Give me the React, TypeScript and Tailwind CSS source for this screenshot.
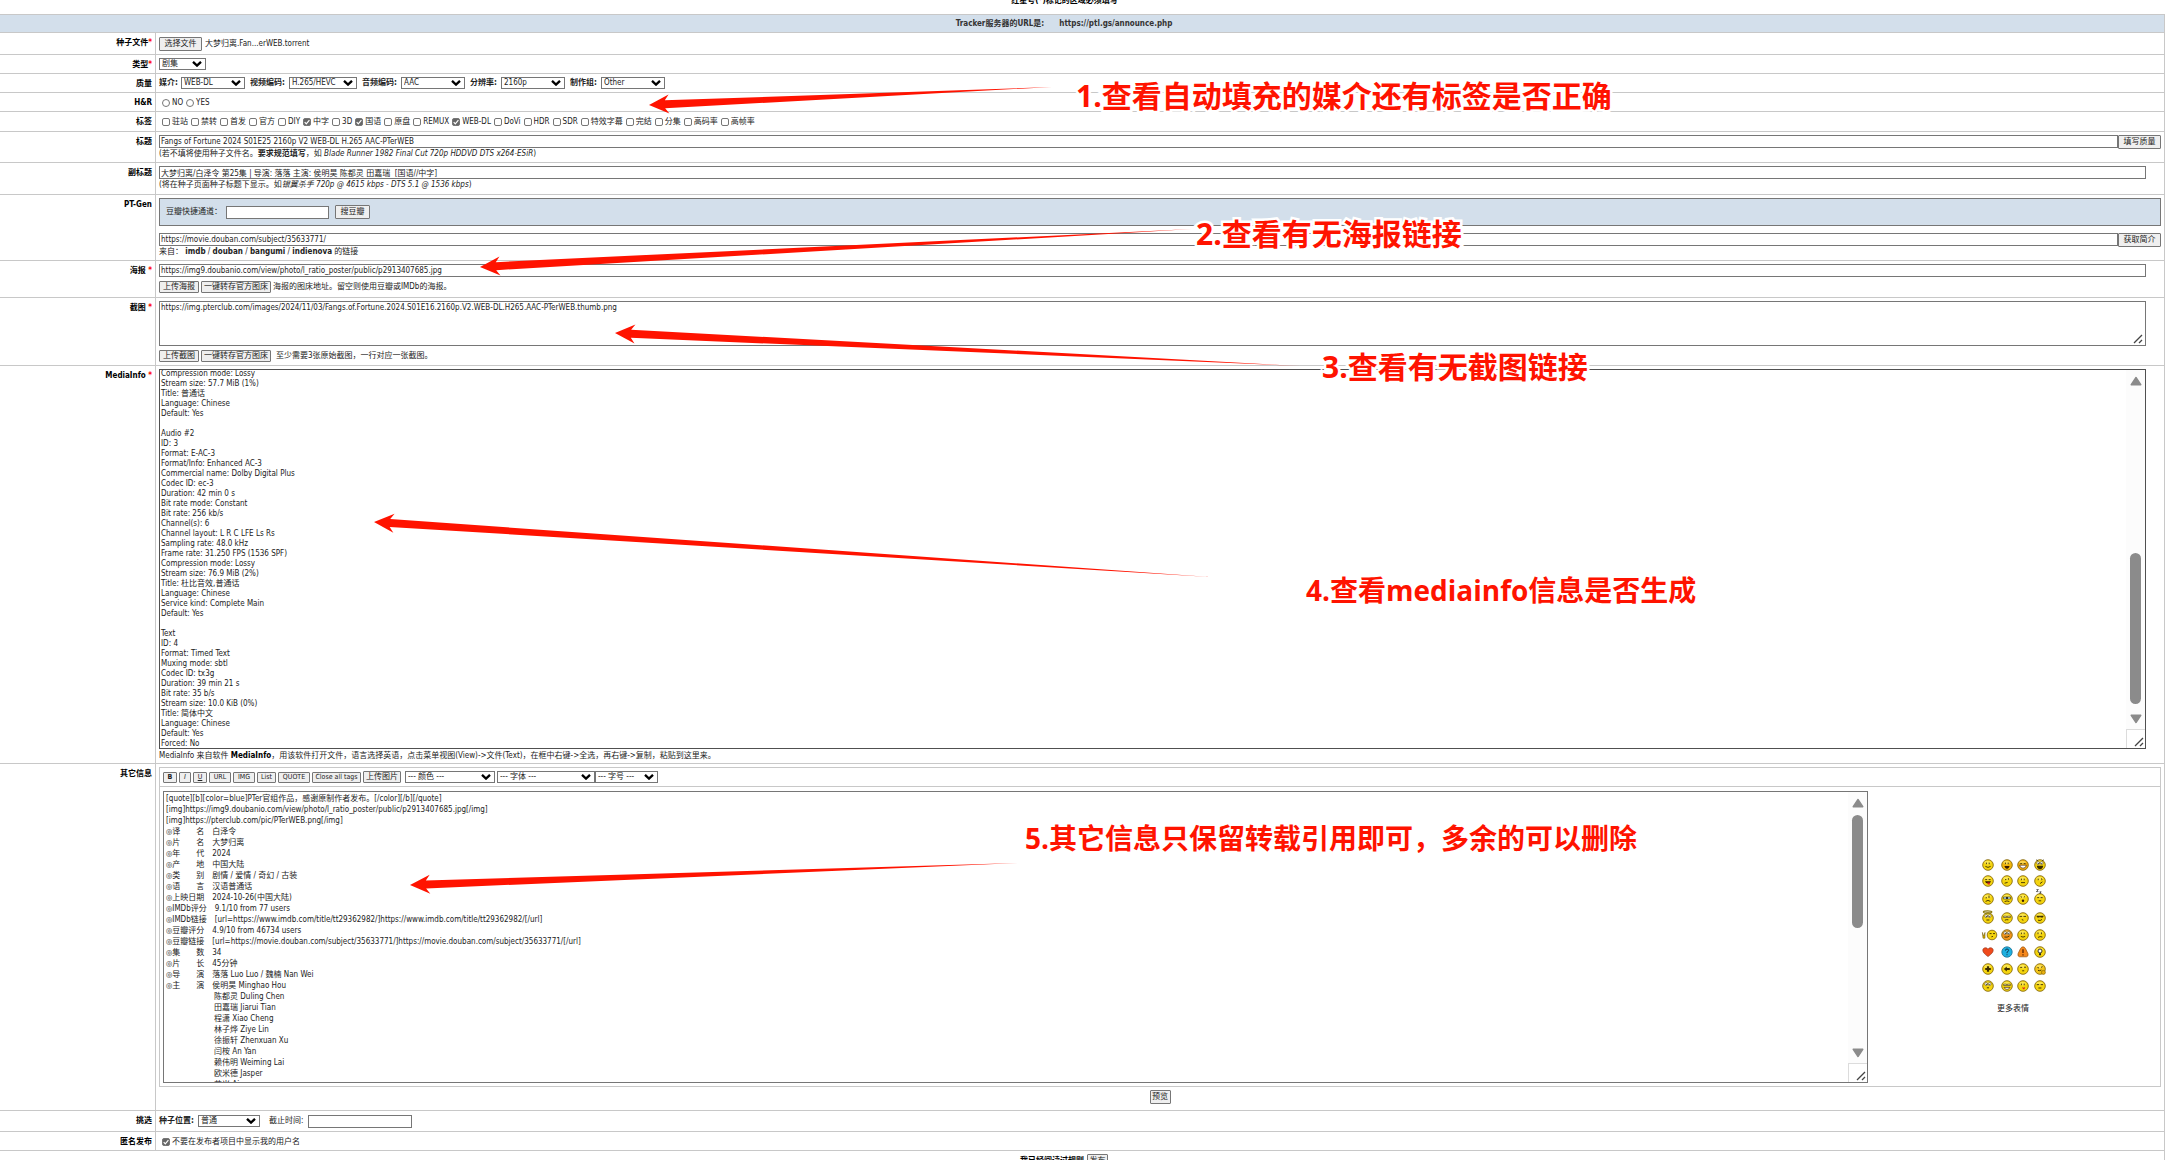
import { useRef, type ReactNode } from "react";

const BTN =
  "flex shrink-0 cursor-pointer items-center justify-center whitespace-nowrap rounded-[1px] border border-[#767676] bg-[#efefef] text-[#222]";
const FIELD = "block h-[13px] min-w-0 border border-[#767676] bg-white px-px text-[8px] leading-[11px] text-[#222] outline-none";

function Row({ label, required, htmlFor, height, children }: { label: string; required?: string; htmlFor?: string; height: string; children: ReactNode }) {
  return (
    <div className={`flex border-b border-[#c8c8c8] ${height}`}>
      <div className="w-[192px] shrink-0 border-r border-[#c8c8c8] pt-[4px] pr-[3px] text-right font-bold text-black">
        <label htmlFor={htmlFor}>
          {label}
          {required && <span className="text-[#ff0000]">{required}</span>}
        </label>
      </div>
      <div className="min-w-0 flex-1 px-[3px] pt-[3px]">{children}</div>
    </div>
  );
}

function Select({ id, width, value, label }: { id: string; width: string; value: string; label?: string }) {
  return (
    <span className={`relative block shrink-0 ${width}`}>
      <select
        id={id}
        aria-label={label}
        className="block h-[12px] w-full appearance-none border border-[#767676] bg-white px-[2px] text-[8px] leading-[10px] text-[#222] outline-none"
      >
        <option>{value}</option>
      </select>
      <svg viewBox="0 0 10 6" className="pointer-events-none absolute top-[3px] right-[4px] h-[6px] w-[10px]" aria-hidden="true">
        <path d="M1 .8l4 3.8L9 .8" fill="none" stroke="#000" strokeWidth="2.3" />
      </svg>
    </span>
  );
}

function Check({ id, text, checked }: { id: string; text: string; checked?: boolean }) {
  return (
    <span className="mr-[3px] flex items-center gap-[2px]">
      <span className="relative block size-[8px]">
        <input
          id={id}
          type="checkbox"
          defaultChecked={checked}
          className="peer block size-[8px] appearance-none rounded-[2px] border border-[#767676] bg-white checked:bg-[#666]"
        />
        <svg viewBox="0 0 8 8" className="pointer-events-none absolute inset-0 hidden size-[8px] peer-checked:block" aria-hidden="true">
          <path d="M1.7 4.2l1.6 1.6L6.4 2.2" fill="none" stroke="#fff" strokeWidth="1.2" />
        </svg>
      </span>
      <label htmlFor={id} className="pt-px">{text}</label>
    </span>
  );
}

function Grip() {
  return (
    <svg viewBox="0 0 10 10" className="pointer-events-none size-[10px] shrink-0" aria-hidden="true">
      <path d="M1 9l8-8M6 9l3-3" stroke="#444" strokeWidth="1.3" fill="none" />
    </svg>
  );
}

function ScrollBar({ children }: { children: ReactNode }) {
  return (
    <div className="flex w-[19px] shrink-0 flex-col items-center bg-[#fcfcfc]" aria-hidden="true">
      <svg viewBox="0 0 12 10" className="mt-[6px] h-[10px] w-[12px] shrink-0">
        <path d="M6 1.5L10.8 8.7H1.2z" fill="#8b8b8b" stroke="#8b8b8b" strokeWidth="1.4" strokeLinejoin="round" />
      </svg>
      {children}
      <svg viewBox="0 0 12 10" className="mb-[5px] h-[10px] w-[12px] shrink-0">
        <path d="M6 8.5L10.8 1.3H1.2z" fill="#8b8b8b" stroke="#8b8b8b" strokeWidth="1.4" strokeLinejoin="round" />
      </svg>
      <div className="flex size-[19px] shrink-0 items-end justify-end border-t border-l border-[#dcdcdc] bg-white p-px">
        <Grip />
      </div>
    </div>
  );
}

const TAGS: [string, boolean?][] = [
  ["驻站"], ["禁转"], ["首发"], ["官方"], ["DIY"], ["中字", true], ["3D"], ["国语", true], ["原盘"], ["REMUX"],
  ["WEB-DL", true], ["DoVi"], ["HDR"], ["SDR"], ["特效字幕"], ["完结"], ["分集"], ["高码率"], ["高帧率"],
];

const QUALITY = [
  { id: "medium", label: "媒介:", value: "WEB-DL", labelWidth: "w-[22px]", width: "w-[64px]" },
  { id: "vcodec", label: "视频编码:", value: "H.265/HEVC", labelWidth: "w-[39px]", width: "w-[68px]" },
  { id: "acodec", label: "音频编码:", value: "AAC", labelWidth: "w-[39px]", width: "w-[64px]" },
  { id: "resolution", label: "分辨率:", value: "2160p", labelWidth: "w-[31px]", width: "w-[64px]" },
  { id: "team", label: "制作组:", value: "Other", labelWidth: "w-[31px]", width: "w-[64px]" },
];

const MEDIAINFO = `Compression mode: Lossy
Stream size: 57.7 MiB (1%)
Title: 普通话
Language: Chinese
Default: Yes

Audio #2
ID: 3
Format: E-AC-3
Format/Info: Enhanced AC-3
Commercial name: Dolby Digital Plus
Codec ID: ec-3
Duration: 42 min 0 s
Bit rate mode: Constant
Bit rate: 256 kb/s
Channel(s): 6
Channel layout: L R C LFE Ls Rs
Sampling rate: 48.0 kHz
Frame rate: 31.250 FPS (1536 SPF)
Compression mode: Lossy
Stream size: 76.9 MiB (2%)
Title: 杜比音效,普通话
Language: Chinese
Service kind: Complete Main
Default: Yes

Text
ID: 4
Format: Timed Text
Muxing mode: sbtl
Codec ID: tx3g
Duration: 39 min 21 s
Bit rate: 35 b/s
Stream size: 10.0 KiB (0%)
Title: 简体中文
Language: Chinese
Default: Yes
Forced: No`;

const DESCRIPTION = `[quote][b][color=blue]PTer官组作品，感谢原制作者发布。[/color][/b][/quote]
[img]https://img9.doubanio.com/view/photo/l_ratio_poster/public/p2913407685.jpg[/img]
[img]https://pterclub.com/pic/PTerWEB.png[/img]
◎译　　名　白泽令
◎片　　名　大梦归离
◎年　　代　2024
◎产　　地　中国大陆
◎类　　别　剧情 / 爱情 / 奇幻 / 古装
◎语　　言　汉语普通话
◎上映日期　2024-10-26(中国大陆)
◎IMDb评分　9.1/10 from 77 users
◎IMDb链接　[url=https://www.imdb.com/title/tt29362982/]https://www.imdb.com/title/tt29362982/[/url]
◎豆瓣评分　4.9/10 from 46734 users
◎豆瓣链接　[url=https://movie.douban.com/subject/35633771/]https://movie.douban.com/subject/35633771/[/url]
◎集　　数　34
◎片　　长　45分钟
◎导　　演　落落 Luo Luo / 魏楠 Nan Wei
◎主　　演　侯明昊 Minghao Hou
　　　　　　陈都灵 Duling Chen
　　　　　　田嘉瑞 Jiarui Tian
　　　　　　程潇 Xiao Cheng
　　　　　　林子烨 Ziye Lin
　　　　　　徐振轩 Zhenxuan Xu
　　　　　　闫桉 An Yan
　　　　　　赖伟明 Weiming Lai
　　　　　　欧米德 Jasper
　　　　　　艾米 Aimee`;

type Face = { eyes?: string; mouth?: string; extra?: ReactNode; fill?: string; glyph?: ReactNode };
const DOTS = "M4.4 3.6v1.6M7.2 3.6v1.6";
const LIDS = "M3.2 4.6h2M6.6 4.6h2";
const shades = <path d="M2.6 4.2h3v1.3h-3zM6.4 4.2h3v1.3h-3z" fill="#fff" stroke="#3a2c00" strokeWidth=".6" />;
const bigEyes = (
  <g>
    <circle cx="4.2" cy="4" r="1.5" fill="#fff" stroke="#3a2c00" strokeWidth=".5" />
    <circle cx="7.6" cy="4" r="1.5" fill="#fff" stroke="#3a2c00" strokeWidth=".5" />
    <circle cx="4.5" cy="4.2" r=".5" />
    <circle cx="7.3" cy="4.2" r=".5" />
  </g>
);
const FACES: Face[] = [
  { eyes: DOTS, mouth: "M3.4 7.4q2.6 2 5.2 0" },
  { eyes: DOTS, fill: "#f2b50a", extra: <path d="M3.4 7h5.2q-.5 2.6-2.6 2.6T3.4 7z" fill="#3a1a00" />, mouth: "M5.2 9.2h1.6" },
  { eyes: LIDS, fill: "#f2a90a", extra: <path d="M2.6 6.2h6.8q-.6 3-3.4 3T2.6 6.2z" fill="#fff" stroke="#3a1a00" strokeWidth=".6" /> },
  { extra: <g>{bigEyes}<path d="M2.8 6.8h6.4q-.4 3.4-3.2 3.4T2.8 6.8z" fill="#3a2c00" /><path d="M2 .8l2 1M10 .8l-2 1" stroke="#3a2c00" strokeWidth=".7" /></g> },
  { eyes: LIDS, extra: <g><path d="M3 6.2h6q-.6 2.4-3 2.4t-3-2.4z" fill="#3a1a00" /><path d="M5.4 7.4h2.4v2.2H5.8z" fill="#e02020" /></g> },
  { eyes: "M4 4.6h1.4M7.4 3.2v1.6", mouth: "M3.6 8.2l3-.8" },
  { eyes: DOTS, mouth: "M4 7.6h4" },
  { eyes: "M4.2 3.6v1.6M7.4 3.4q1.4.4 0 1.8", mouth: "M6 8.6l2.4-1.8" },
  { eyes: "M4.2 4v1.4M7 2.6v2.4", mouth: "M3.6 8.4q2.4-2 4.8 0" },
  { extra: <g><path d="M2.4 4h7.2v2H2.4z" fill="#bfe6f2" stroke="#3a2c00" strokeWidth=".6" /><circle cx="6" cy="5" r="1" /></g>, mouth: "M3.6 8.6q2.4-1.4 4.8 0" },
  { eyes: "M3.6 3.4l1.4 1M8 3.4l-1.2 1", extra: <circle cx="6" cy="7.8" r="1.2" fill="#3a1a00" /> },
  { eyes: LIDS, mouth: "M4.6 7.8h2.6", extra: <path d="M2.4-3.4h2l-2 2h2M5.6-1.2h1.6L5.6.2h1.6" fill="none" stroke="#222" strokeWidth=".7" /> },
  { extra: <g>{bigEyes}<ellipse cx="5.6" cy="0" rx="4.2" ry="1.2" fill="none" stroke="#8a7a10" strokeWidth="1.3" /></g>, mouth: "M4.4 8h3" },
  { extra: shades, mouth: "M3.8 8.2q1.4-.8 3.6-.4" },
  { eyes: "M2.6 4.4h2.6M6.4 4.4H9", mouth: "M4.8 7.6l1.6.6" },
  { extra: <path d="M2.2 3.8h7.6L8.8 5.6H6.6L6 4.6l-.6 1H3.4z" fill="#3a2c00" />, mouth: "M4 8.2q2.4 1 4-.8" },
  {
    glyph: (
      <g>
        <path d="M.4 3.4l1.2 3.8L3 3.400v5.800H1z" fill="#d8b400" stroke="#6b5200" strokeWidth=".5" />
        <circle cx="10" cy="6" r="4.800" fill="#f4d40e" stroke="#8a6d10" strokeWidth=".9" />
        <path d="M7.600 4.600h2M11 4.600h2M9.400 7.800l1.600-.4" stroke="#3a2c00" strokeWidth=".9" />
      </g>
    ),
  },
  { fill: "#f5941c", extra: bigEyes, mouth: "M3.4 8q3 .8 5-1" },
  { eyes: DOTS, mouth: "M3.8 7.4q2.2 1.4 4.4 0" },
  { eyes: "M4 3.4v1.8M7.4 3.4v1.8", mouth: "M4 8.4q2-1.4 4.4-.4" },
  { glyph: <path d="M6 10.6C2.6 8 .8 6.4.8 4.2.8 1.6 4.4.8 6 3.2 7.6.8 11.2 1.6 11.2 4.2 11.2 6.4 9.4 8 6 10.6z" fill="#f04a1c" stroke="#8a2a10" strokeWidth=".6" /> },
  { glyph: <g><circle cx="6" cy="6" r="5.2" fill="#1fb0e0" stroke="#1a6f90" strokeWidth=".8" /><path d="M4.4 4.600q0-1.600 1.600-1.600t1.600 1.400Q7.600 5.400 6 6.200v1M6 8.200v1" fill="none" stroke="#0d3c55" strokeWidth="1" /></g> },
  { glyph: <g><path d="M6 .8q1.600 0 2.600 2l2.400 5q.6 2.600-1.600 3H2.600Q.4 10.400 1 7.800l2.400-5Q4.400.8 6 .8z" fill="#f5881c" stroke="#94500c" strokeWidth=".7" /><path d="M6 3.200v3.800M6 8.200v1.200" stroke="#4a1c00" strokeWidth="1.200" /></g> },
  { extra: <g><circle cx="6" cy="5" r="2" fill="#fff" stroke="#222" strokeWidth=".9" /><path d="M5 7.200h2v2H5z" fill="#222" /></g> },
  { extra: <path d="M6 3.200v5.600M3.200 6h5.600" stroke="#3a2c00" strokeWidth="2.200" /> },
  { extra: <path d="M2.800 6l3-2.600v1.600h3v2h-3v1.600z" fill="#3a2c00" /> },
  { eyes: "M3.200 4.400h2M7 4.200h2", mouth: "M5.200 7.800h2" },
  { fill: "#f2c41a", eyes: "M3.400 4.400l1.600.6M8.600 3.600l-1.600.8", mouth: "M4 7.400q1.600.8 3.400-.4", extra: <circle cx="9.400" cy="9.400" r="2" fill="#e8b010" stroke="#7a5a00" strokeWidth=".6" /> },
  { extra: bigEyes, mouth: "M4.800 7.800h2.200" },
  { extra: <g>{shades}<path d="M3 7.400h6q-.8 2-3 2t-3-2z" fill="#fff" stroke="#3a1a00" strokeWidth=".6" /></g> },
  { eyes: DOTS, extra: <path d="M5.200 7l1.400.8L8.200 7 7.400 9.200H6z" fill="#e02020" /> },
  { eyes: "M2.800 4.600h2.400M6.600 4.600H9", mouth: "M4.400 8h3" },
];

function Smiley({ face }: { face: Face }) {
  return (
    <svg viewBox="0 0 12 12" className="size-[12px] overflow-visible" aria-hidden="true">
      {face.glyph ?? (
        <>
          <circle cx="6" cy="6" r="5.3" fill={face.fill ?? "#f4d40e"} stroke="#8a6d10" strokeWidth=".9" />
          <ellipse cx="5.6" cy="3.6" rx="3.2" ry="1.8" fill="#fff27a" opacity=".6" />
          {face.extra}
          <path d={face.eyes ?? ""} stroke="#3a2c00" strokeWidth=".9" fill="none" />
          <path d={face.mouth ?? ""} stroke="#3a2c00" strokeWidth=".9" fill="none" />
        </>
      )}
    </svg>
  );
}

/* Arrow tips and tapered tails drawn over the form. */
const ARROWS = [
  { tip: [649, 105], tail: [1052, 87] },
  { tip: [480, 267], tail: [1192, 229] },
  { tip: [615, 333], tail: [1300, 366] },
  { tip: [374, 522], tail: [1210, 577] },
  { tip: [410, 885], tail: [1018, 863] },
];

function Arrows() {
  return (
    <svg className="pointer-events-none absolute inset-0 size-full" aria-hidden="true">
      {ARROWS.map(({ tip, tail }) => {
        const dx = tail[0] - tip[0];
        const dy = tail[1] - tip[1];
        const len = Math.hypot(dx, dy);
        const angle = (Math.atan2(dy, dx) * 180) / Math.PI;
        return (
          <path
            key={tip[0]}
            transform={`translate(${tip[0]} ${tip[1]}) rotate(${angle})`}
            d={`M0 0L20 -9.500L16 -4L${len} 0L16 4L20 9.500Z`}
            fill="#ff1300"
          />
        );
      })}
    </svg>
  );
}

function Note({ place, children }: { place: string; children: string }) {
  return (
    <p
      className={`pointer-events-none absolute leading-[40px] font-bold whitespace-nowrap text-[#ff1300] [paint-order:stroke] [-webkit-text-stroke:5px_white] ${place}`}
    >
      {children}
    </p>
  );
}

export default function App() {
  const file = useRef<HTMLInputElement>(null);
  return (
    <div className="relative h-screen overflow-hidden bg-white font-['DejaVu_Sans_Condensed','Noto_Sans_CJK_SC',sans-serif] text-[8px] leading-[12px] text-[#222]">
      <form className="mr-4 -ml-9" onSubmit={(e) => e.preventDefault()}>
        <p className="-mt-[6px] h-[20px] text-center leading-[14px] font-bold text-black">
          红星号(<span className="text-[#ff0000]">*</span>)标记的区域必须填写
        </p>
        <div className="border-t border-r border-[#c8c8c8]">
          <div className="flex h-[18px] items-center justify-center gap-[15px] border-b border-[#c8c8c8] bg-[#d3dfeb] font-bold text-[#333]">
            <span>Tracker服务器的URL是:</span>
            <span>https://ptl.gs/announce.php</span>
          </div>

          <Row label="种子文件" required="*" htmlFor="torrent" height="min-h-[22px]">
            <div className="flex items-center gap-[3px] pt-px">
              <button type="button" onClick={() => file.current?.click()} className={`${BTN} h-[14px] w-[43px]`}>选择文件</button>
              <input ref={file} id="torrent" type="file" className="hidden" />
              <span>大梦归离.Fan...erWEB.torrent</span>
            </div>
          </Row>

          <Row label="类型" required="*" htmlFor="type" height="min-h-[19px]">
            <Select id="type" width="w-[47px]" value="剧集" />
          </Row>

          <Row label="质量" height="min-h-[19px]">
            <div className="flex items-center gap-[5px]">
              {QUALITY.map((q) => (
                <span key={q.id} className="flex items-center">
                  <label htmlFor={q.id} className={`whitespace-nowrap font-bold ${q.labelWidth}`}>{q.label}</label>
                  <Select id={q.id} width={q.width} value={q.value} />
                </span>
              ))}
            </div>
          </Row>

          <Row label="H&R" height="min-h-[19px]">
            <div className="flex items-center gap-[3px] pl-[3px]">
              {["NO", "YES"].map((v) => (
                <span key={v} className="flex items-center gap-[2px]">
                  <input id={`hr-${v}`} name="hr" type="radio" className="block size-[8px] appearance-none rounded-full border border-[#767676] bg-white" />
                  <label htmlFor={`hr-${v}`} className="pt-px">{v}</label>
                </span>
              ))}
            </div>
          </Row>

          <Row label="标签" height="min-h-[20px]">
            <div className="flex items-center pl-[3px]">
              {TAGS.map(([text, on]) => (
                <Check key={text} id={`tag-${text}`} text={text} checked={on} />
              ))}
            </div>
          </Row>

          <Row label="标题" htmlFor="title" height="min-h-[31px]">
            <div className="flex h-[13px]">
              <input id="title" className={`${FIELD} flex-1`} defaultValue="Fangs of Fortune 2024 S01E25 2160p V2 WEB-DL H.265 AAC-PTerWEB" />
              <button type="button" className={`${BTN} h-[14px] w-[43px]`}>填写质量</button>
            </div>
            <p>
              (若不填将使用种子文件名。<b>要求规范填写</b>，如 <i>Blade Runner 1982 Final Cut 720p HDDVD DTS x264-ESiR</i>)
            </p>
          </Row>

          <Row label="副标题" htmlFor="subtitle" height="min-h-[32px]">
            <div className="pr-[15px]">
              <input id="subtitle" className={`${FIELD} w-full`} defaultValue="大梦归离/白泽令 第25集 | 导演: 落落 主演: 侯明昊 陈都灵 田嘉瑞  [国语//中字]" />
            </div>
            <p>
              (将在种子页面种子标题下显示。如<i>银翼杀手 720p @ 4615 kbps - DTS 5.1 @ 1536 kbps</i>)
            </p>
          </Row>

          <Row label="PT-Gen" htmlFor="ptgen" height="min-h-[66px]">
            <div className="flex h-[28px] items-center border border-[#767676] bg-[#d3dfeb] pl-[6px]">
              <label htmlFor="douban" className="w-[60px]">豆瓣快捷通道：</label>
              <input id="douban" className={`${FIELD} w-[103px]`} />
              <button type="button" className={`${BTN} ml-[6px] h-[14px] w-[35px]`}>搜豆瓣</button>
            </div>
            <div className="mt-[7px] flex h-[13px]">
              <input id="ptgen" className={`${FIELD} flex-1`} defaultValue="https://movie.douban.com/subject/35633771/" />
              <button type="button" className={`${BTN} h-[14px] w-[43px]`}>获取简介</button>
            </div>
            <p>
              来自： <b>imdb</b> / <b>douban</b> / <b>bangumi</b> / <b>indienova</b> 的链接
            </p>
          </Row>

          <Row label="海报" required=" *" htmlFor="poster" height="min-h-[37px]">
            <div className="pr-[15px]">
              <input id="poster" className={`${FIELD} w-full`} defaultValue="https://img9.doubanio.com/view/photo/l_ratio_poster/public/p2913407685.jpg" />
            </div>
            <div className="mt-[4px] flex h-[12px] items-center gap-[2px]">
              <button type="button" className={`${BTN} h-[12px] w-[40px]`}>上传海报</button>
              <button type="button" className={`${BTN} h-[12px] w-[70px]`}>一键转存官方图床</button>
              <span>海报的图床地址。留空则使用豆瓣或IMDb的海报。</span>
            </div>
          </Row>

          <Row label="截图" required=" *" htmlFor="shots" height="min-h-[68px]">
            <div className="mr-[15px] flex h-[45px] items-end border border-[#767676] pr-[2px] pb-px">
              <textarea
                id="shots"
                className="block h-full flex-1 resize-none overflow-hidden p-px text-[8px] leading-[10px] text-[#222] outline-none"
                defaultValue="https://img.pterclub.com/images/2024/11/03/Fangs.of.Fortune.2024.S01E16.2160p.V2.WEB-DL.H265.AAC-PTerWEB.thumb.png"
              />
              <Grip />
            </div>
            <div className="mt-[4px] flex h-[12px] items-center gap-[2px]">
              <button type="button" className={`${BTN} h-[12px] w-[40px]`}>上传截图</button>
              <button type="button" className={`${BTN} h-[12px] w-[70px]`}>一键转存官方图床</button>
              <span className="pl-[3px]">至少需要3张原始截图，一行对应一张截图。</span>
            </div>
          </Row>

          <Row label="MediaInfo" required=" *" htmlFor="mediainfo" height="min-h-[398px]">
            <div className="mr-[15px] flex h-[380px] border border-[#505050]">
              <textarea
                id="mediainfo"
                ref={(el) => { if (el) el.scrollTop = 1; }}
                className="block h-full flex-1 resize-none overflow-hidden px-px text-[8px] leading-[10px] text-[#222] outline-none"
                defaultValue={MEDIAINFO}
              />
              <ScrollBar>
                <div className="mt-auto mb-[10px] h-[151px] w-[11px] rounded-full bg-[#8b8b8b]" />
              </ScrollBar>
            </div>
            <p className="pt-px">
              MediaInfo 来自软件 <b className="text-black">MediaInfo</b>，用该软件打开文件，语言选择英语，点击菜单视图(View)-&gt;文件(Text)，在框中右键-&gt;全选，再右键-&gt;复制，粘贴到这里来。
            </p>
          </Row>

          <Row label="其它信息" htmlFor="descr" height="min-h-[347px]">
            <div className="border border-[#c8c8c8]">
              <div className="flex h-[19px] items-center gap-[2px] border-b border-[#c8c8c8] pl-[3px]">
                <button type="button" className={`${BTN} h-[11px] w-[14px] text-[7px] font-bold`}>B</button>
                <button type="button" className={`${BTN} h-[11px] w-[12px] text-[7px] italic`}>I</button>
                <button type="button" className={`${BTN} h-[11px] w-[14px] text-[7px] underline`}>U</button>
                <button type="button" className={`${BTN} h-[11px] w-[22px] text-[7px]`}>URL</button>
                <button type="button" className={`${BTN} h-[11px] w-[22px] text-[7px]`}>IMG</button>
                <button type="button" className={`${BTN} h-[11px] w-[19px] text-[7px]`}>List</button>
                <button type="button" className={`${BTN} h-[11px] w-[32px] text-[7px]`}>QUOTE</button>
                <button type="button" className={`${BTN} h-[11px] w-[49px] text-[7px]`}>Close all tags</button>
                <button type="button" className={`${BTN} mr-[2px] h-[12px] w-[38px]`}>上传图片</button>
                <Select id="color" label="颜色" width="w-[90px]" value="--- 颜色 ---" />
                <div className="flex">
                  <Select id="font" label="字体" width="w-[98px]" value="--- 字体 ---" />
                  <Select id="size" label="字号" width="w-[63px]" value="--- 字号 ---" />
                </div>
              </div>
              <div className="flex">
                <div className="min-w-0 flex-1 pt-[4px] pb-[3px] pl-[3px]">
                  <div className="flex h-[292px] border border-[#767676]">
                    <textarea
                      id="descr"
                      className="block h-full flex-1 resize-none overflow-hidden px-[2px] pt-px text-[8px] leading-[11px] text-[#222] outline-none"
                      defaultValue={DESCRIPTION}
                    />
                    <ScrollBar>
                      <div className="mt-[7px] mb-auto h-[113px] w-[11px] rounded-full bg-[#8b8b8b]" />
                    </ScrollBar>
                  </div>
                </div>
                <div className="flex w-[292px] flex-col items-center pt-[70px] pr-[2px]">
                  <div className="grid grid-cols-[20px_17px_16px_17px] grid-rows-[16px_16px_20px_18px_16px_17px_17px_17px] items-center justify-items-center">
                    {FACES.map((f, i) => (
                      <Smiley key={i} face={f} />
                    ))}
                  </div>
                  <a href="#more" className="mt-[9px]">更多表情</a>
                </div>
              </div>
            </div>
            <button type="button" className={`${BTN} mx-auto mt-[3px] h-[14px] w-[21px]`}>预览</button>
          </Row>

          <Row label="挑选" height="min-h-[21px]">
            <div className="flex h-[14px] items-center">
              <label htmlFor="pos" className="w-[39px] font-bold whitespace-nowrap">种子位置:</label>
              <Select id="pos" width="w-[62px]" value="普通" />
              <label htmlFor="until" className="ml-[9px] w-[39px]">截止时间:</label>
              <input id="until" className={`${FIELD} w-[104px]`} />
            </div>
          </Row>

          <Row label="匿名发布" height="min-h-[19px]">
            <div className="flex pl-[3px]">
              <Check id="anon" text="不要在发布者项目中显示我的用户名" checked />
            </div>
          </Row>

          <div className="flex justify-center gap-[3px] pt-[3px]">
            <b className="pt-px text-black">我已经阅读过规则</b>
            <button type="submit" className={`${BTN} h-[14px] w-[21px]`}>发布</button>
          </div>
        </div>
      </form>

      <Arrows />
      <div className="font-['Open_Sans','Noto_Sans_CJK_SC',sans-serif]">
        <Note place="top-[76px] left-[1076px] text-[30px]">1.查看自动填充的媒介还有标签是否正确</Note>
        <Note place="top-[214px] left-[1196px] text-[30px]">2.查看有无海报链接</Note>
        <Note place="top-[347px] left-[1322px] text-[30px]">3.查看有无截图链接</Note>
        <Note place="top-[570px] left-[1306px] text-[28px]">4.查看mediainfo信息是否生成</Note>
        <Note place="top-[818px] left-[1025px] text-[28px]">5.其它信息只保留转载引用即可，多余的可以删除</Note>
      </div>
    </div>
  );
}
